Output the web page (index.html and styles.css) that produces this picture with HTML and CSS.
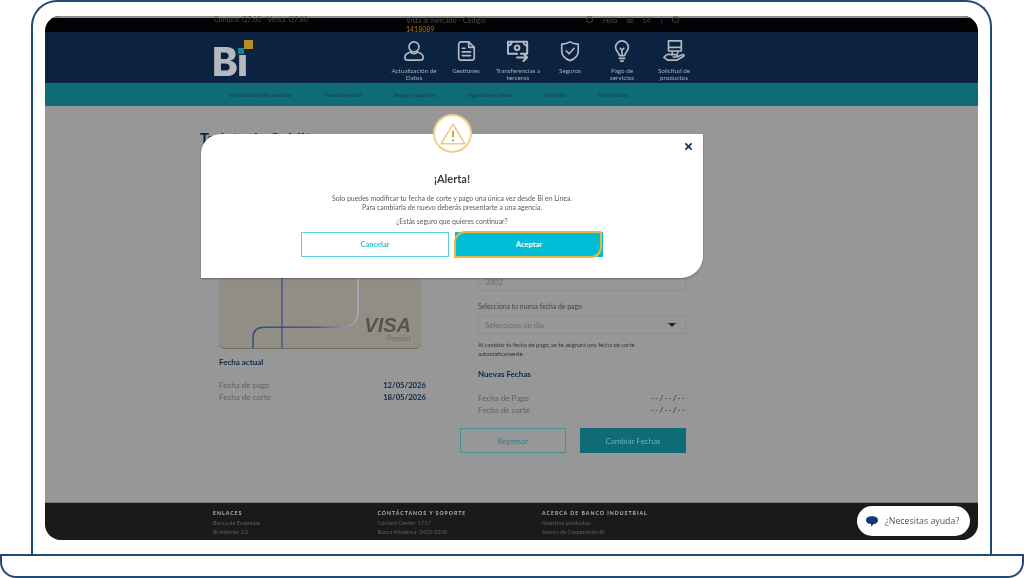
FILE: index.html
```html
<!DOCTYPE html>
<html lang="es">
<head>
    <meta charset="UTF-8">
    <meta name="viewport" content="width=device-width, initial-scale=1.0">
    <title>Cambio de fechas</title>
    <link rel="stylesheet" href="styles.css">
</head>
<body>
    <div class="lid">
        <div class="screen">
            <div class="topbar">
                <div class="topbar-rate">Compra: Q7.60 - Venta: Q7.80</div>
                <div class="topbar-user">
                    <div>Vista al mercado - Código:</div>
                    <div class="topbar-code">1418089</div>
                </div>
                <div class="topbar-tools">
                    <span class="topbar-dot"></span>
                    <span class="topbar-name">Hola de 14</span>
                    <span>|</span>
                    <span class="topbar-dot"></span>
                </div>
            </div>

            <div class="nav">
                <div class="logo">
                    <span class="logo-text">Bı</span>
                    <span class="logo-square-gold"></span>
                    <span class="logo-square-teal"></span>
                </div>
                <div class="nav-items">
                    <div class="nav-item">
                        <svg class="nav-icon" viewBox="0 0 24 24"><circle cx="12" cy="7.5" r="5.5"/><path d="M8 13c-3 1-6 2.500-6 6 0 2 1 3 3 3h14c2 0 3-1 3-3 0-3.500-3-5-6-6-1 1.500-2.500 2-4 2s-3-.5-4-2z"/></svg>
                        <span>Actualización de Datos</span>
                    </div>
                    <div class="nav-item">
                        <svg class="nav-icon" viewBox="0 0 24 24"><path d="M7 2h8l6 6v11c0 2-1 3-3 3H7c-2 0-3-1-3-3V5c0-2 1-3 3-3z"/><path d="M15 2v6h6M8 9h3M8 13h9M8 17h9"/></svg>
                        <span>Gestiones</span>
                    </div>
                    <div class="nav-item">
                        <svg class="nav-icon nav-icon-bill" viewBox="0 0 24 24"><path d="M15 15h7V2H1v13h10"/><path d="M1 6c2.500 0 4-1.500 4-4M18 2c0 2.500 2 4 4 4"/><circle cx="11" cy="8.500" r="2.500"/><path d="M11 19h11M18 15l4 4-4 4"/></svg>
                        <span>Transferencias a terceros</span>
                    </div>
                    <div class="nav-item">
                        <svg class="nav-icon" viewBox="0 0 24 24"><path d="M12 2c3 2 6 2.500 9 2.500V12c0 5-3.500 8.500-9 10.500C6.500 20.500 3 17 3 12V4.500C6 4.500 9 4 12 2z"/><path d="M8 12l3 3 5.500-6"/></svg>
                        <span>Seguros</span>
                    </div>
                    <div class="nav-item">
                        <svg class="nav-icon" viewBox="0 0 24 24"><path d="M9 17c0-3-4-4.500-4-9a7 7 0 0 1 14 0c0 4.500-4 6-4 9z"/><path d="M9 20h6M10.500 23h3M10 9l2 2 2-2M12 11v6"/></svg>
                        <span>Pago de<br>servicios</span>
                    </div>
                    <div class="nav-item">
                        <svg class="nav-icon" viewBox="0 0 24 24"><path d="M6 1h14v11H6zM6 8h14M10 12v3M16 12v3"/><path d="M1 19c2-3 5-4 8-3h5c2 0 2 2.500 0 2.500h-3 4l6-2.500c2-.5 2.500 1 1 2l-7 4H5z"/></svg>
                        <span>Solicitud de productos</span>
                    </div>
                </div>
            </div>

            <div class="subnav">
                <span>Información de cuentas</span>
                <span>Transferencias</span>
                <span>Pagos y aportes</span>
                <span>Agencia en línea</span>
                <span>Historial</span>
                <span>Otros sitios</span>
            </div>

            <div class="main">
                <h2 class="page-title">Tarjeta de Crédito</h2>
                <div class="columns">
                    <div class="col-left">
                        <div class="card">
                            <svg class="card-lines" viewBox="0 0 202 126" preserveAspectRatio="none">
                                <defs>
                                    <linearGradient id="lineFade" x1="0" y1="0" x2="1" y2="0">
                                        <stop offset="0" stop-color="#2f4c8c"/>
                                        <stop offset="0.6" stop-color="#3f5a96"/>
                                        <stop offset="1" stop-color="#a3adc2"/>
                                    </linearGradient>
                                </defs>
                                <path class="card-line-soft" d="M139 0V89c0 9-5 16-14 16H45c-7 0-11 4-11 11v10"/>
                                <path class="card-line" d="M63 0V126"/>
                            </svg>
                            <div class="card-brand">
                                <span class="card-visa">VISA</span>
                                <span class="card-tier">Premier</span>
                            </div>
                        </div>
                        <h3 class="section-title">Fecha actual</h3>
                        <div class="date-rows">
                            <div class="date-row"><span>Fecha de pago</span><strong>12/05/2026</strong></div>
                            <div class="date-row"><span>Fecha de corte</span><strong>18/05/2026</strong></div>
                        </div>
                    </div>

                    <div class="col-right">
                        <div class="field-label">Selecciona tu tarjeta</div>
                        <div class="select select-card"><span>3802</span></div>
                        <div class="field-label field-label-date">Selecciona tu nueva fecha de pago</div>
                        <div class="select">
                            <span>Selecciona un día</span>
                            <span class="select-arrow"></span>
                        </div>
                        <p class="note">Al cambiar tu fecha de pago, se te asignará una fecha de corte automáticamente.</p>
                        <h3 class="section-title section-title-new">Nuevas Fechas</h3>
                        <div class="date-rows date-rows-new">
                            <div class="date-row"><span>Fecha de Pago</span><b>--/--/--</b></div>
                            <div class="date-row"><span>Fecha de corte</span><b>--/--/--</b></div>
                        </div>
                        <div class="form-buttons">
                            <div class="btn-back">Regresar</div>
                            <div class="btn-change">Cambiar Fechas</div>
                        </div>
                    </div>
                </div>
            </div>

            <div class="footer">
                <div class="footer-col">
                    <h4>ENLACES</h4>
                    <div>Banca de Empresas</div>
                    <div>Bi Internet 2.0</div>
                </div>
                <div class="footer-col">
                    <h4>CONTÁCTANOS Y SOPORTE</h4>
                    <div>Contact Center: 1717</div>
                    <div>Banca Moderna: 2420-3200</div>
                </div>
                <div class="footer-col">
                    <h4>ACERCA DE BANCO INDUSTRIAL</h4>
                    <div>Nuestros productos</div>
                    <div>Acerca de Corporación Bi</div>
                </div>
            </div>

            <div class="modal">
                <div class="modal-icon">
                    <svg viewBox="0 0 24 24"><path d="M12 3L23 21H1z"/><path class="modal-icon-mark" d="M12 9v6M12 17v2"/></svg>
                </div>
                <svg class="modal-close" viewBox="0 0 10 10"><path d="M1.500 1.500l7 7M8.500 1.500l-7 7"/></svg>
                <h3 class="modal-title">¡Alerta!</h3>
                <p class="modal-text">Solo puedes modificar tu fecha de corte y pago una única vez desde Bi en Línea.<br>Para cambiarla de nuevo deberás presentarte a una agencia.</p>
                <p class="modal-question">¿Estás seguro que quieres continuar?</p>
                <div class="modal-buttons">
                    <div class="btn-cancel">Cancelar</div>
                    <div class="btn-accept">Aceptar</div>
                </div>
            </div>

            <div class="chat">
                <svg class="chat-icon" viewBox="0 0 14 12"><path d="M7 0c4 0 7 1.800 7 4.500S11.500 9 9 9L6 12V9C2.500 9 0 7.200 0 4.500S3 0 7 0z"/></svg>
                <span>¿Necesitas ayuda?</span>
            </div>
        </div>
    </div>
    <div class="base"></div>
</body>
</html>
```

FILE: styles.css
```css
* {
    margin: 0;
    padding: 0;
    box-sizing: border-box;
}

html, body {
    height: 578px;
    overflow: hidden;
}

body {
    font-family: "Lato", "Open Sans", sans-serif;
    background: white;
    color: #555;
}

/* laptop frame */
.lid {
    width: 961px;
    height: 554px;
    margin-left: 31px;
    padding: 14px 12px 13px;
    border: 2px solid #1f4a78;
    border-bottom: none;
    border-radius: 26px 26px 0 0;
}

.base {
    width: 1024px;
    height: 24px;
    border: 2px solid #1f4a78;
    border-radius: 0 0 16px 16px;
}

.screen {
    position: relative;
    height: 524px;
    display: flex;
    flex-direction: column;
    overflow: hidden;
    border-radius: 15px 15px 16px 16px;
    background: #979797;
    filter: blur(0.45px);
}

/* top strip */
.topbar {
    height: 16px;
    flex-shrink: 0;
    display: flex;
    padding-left: 169px;
    background: #020204;
    border-top: 2px solid #8b8f95;
    font-size: 7px;
    line-height: 9px;
    color: #4d4d42;
}

.topbar-rate {
    width: 192px;
    margin-top: -3px;
}

.topbar-user {
    width: 180px;
    margin-top: -2px;
}

.topbar-code {
    color: #a9781c;
}

.topbar-tools {
    display: flex;
    gap: 10px;
    margin-top: -2px;
}

.topbar-name {
    word-spacing: 7px;
}

.topbar-dot {
    width: 7px;
    height: 7px;
    border: 1px solid #4d4d42;
    border-radius: 50%;
}

/* main nav */
.nav {
    height: 51px;
    flex-shrink: 0;
    display: flex;
    padding-left: 167px;
    background: #0b2240;
}

.logo {
    position: relative;
    width: 176px;
    font-family: "Inter", sans-serif;
}

.logo-text {
    display: block;
    margin-top: 8px;
    font-size: 39px;
    line-height: 44px;
    font-weight: 800;
    letter-spacing: -1px;
    color: #b5b9bd;
}

.logo-square-gold {
    position: absolute;
    left: 32px;
    top: 8px;
    width: 9px;
    height: 9px;
    background: #b58e21;
}

.logo-square-teal {
    position: absolute;
    left: 26px;
    top: 16px;
    width: 6px;
    height: 6px;
    background: #1c7f8f;
}

.nav-items {
    display: flex;
}

.nav-item {
    width: 52px;
    padding-top: 8px;
    text-align: center;
    font-size: 6.3px;
    line-height: 7px;
    color: #a6adb6;
}

.nav-item span {
    display: block;
}

.nav-icon {
    display: block;
    width: 22px;
    height: 22px;
    margin: 0 auto 5px;
    fill: none;
    stroke: #b4bac2;
    stroke-width: 1.8;
    stroke-linejoin: round;
    stroke-linecap: round;
}

.nav-icon-bill {
    stroke-width: 2.2;
}

/* second nav */
.subnav {
    height: 23px;
    flex-shrink: 0;
    display: flex;
    align-items: center;
    gap: 32px;
    padding-left: 184px;
    background: #0e6b77;
    font-size: 6px;
    font-weight: 700;
    color: #0d4a5c;
}

/* page under the dialog */
.main {
    flex: 1;
    padding: 24px 0 0 155px;
}

.page-title {
    font-size: 15px;
    line-height: 16px;
    color: #0b2240;
}

.columns {
    display: grid;
    grid-template-columns: 202px 208px;
    gap: 57px;
    margin: 77px 0 0 19px;
}

.card {
    position: relative;
    height: 126px;
    overflow: hidden;
    border-radius: 0 0 6px 6px;
    border-bottom: 1px solid #6f6c66;
    background: #928e85;
}

.card-lines {
    position: absolute;
    inset: 0;
    width: 100%;
    height: 100%;
    fill: none;
}

.card-line {
    stroke: #2f4c8c;
    stroke-width: 1.2;
}

.card-line-soft {
    stroke: url(#lineFade);
    stroke-width: 1.5;
}

.card-brand {
    position: absolute;
    right: 10px;
    bottom: 5px;
    text-align: right;
    color: #55534e;
}

.card-visa {
    display: block;
    font-family: "Liberation Sans", sans-serif;
    font-size: 20px;
    line-height: 18px;
    font-weight: 700;
    font-style: italic;
}

.card-tier {
    display: block;
    font-size: 7px;
    line-height: 9px;
    color: #6c6a64;
}

.section-title {
    margin-top: 8px;
    font-size: 8px;
    line-height: 11px;
    font-weight: 700;
    color: #0f2747;
}

.date-rows {
    margin-top: 11px;
}

.date-rows-new {
    margin-top: 12px;
}

.date-row {
    display: flex;
    justify-content: space-between;
    font-size: 8px;
    line-height: 12px;
    color: #5f5f5f;
}

.date-row strong {
    margin-right: -5px;
    font-size: 7.7px;
    color: #0f2747;
}

.date-row b {
    letter-spacing: 1.2px;
    color: #4d4d4d;
}

.field-label {
    font-size: 6.9px;
    line-height: 10px;
    color: #444;
}

.field-label-date {
    margin-bottom: 4px;
}

.select {
    height: 19px;
    display: flex;
    align-items: center;
    justify-content: space-between;
    padding: 0 9px 0 6px;
    border: 1px solid #8c8c8c;
    border-radius: 2px;
    font-size: 7.8px;
    color: #6c6c6c;
}

.select-card {
    margin: 3px 0 10px;
}

.select-arrow {
    width: 0;
    height: 0;
    border-left: 4px solid transparent;
    border-right: 4px solid transparent;
    border-top: 4px solid #0f2747;
}

.note {
    max-width: 175px;
    margin-top: 7px;
    font-size: 5.8px;
    line-height: 8.5px;
    color: #333;
}

.section-title-new {
    margin-top: 11px;
}

.col-right {
    margin-top: 36px;
}

.form-buttons {
    display: flex;
    gap: 14px;
    margin: 12px 0 0 -18px;
}

.btn-back,
.btn-change {
    width: 106px;
    height: 25px;
    display: flex;
    align-items: center;
    justify-content: center;
    font-size: 8px;
}

.btn-back {
    border: 1px solid #4f8d95;
    color: #2f7f88;
}

.btn-change {
    background: #0e6b77;
    color: #6fb0b8;
}

/* footer */
.footer {
    height: 38px;
    flex-shrink: 0;
    display: flex;
    padding: 6px 0 0 168px;
    background: #1a1a1a;
    border-top: 1px solid #7a7a7a;
    font-size: 5.6px;
    line-height: 9px;
    color: #5f5f5f;
}

.footer-col {
    width: 164.5px;
}

.footer-col h4 {
    font-size: 5.2px;
    line-height: 9px;
    font-weight: 700;
    letter-spacing: 1px;
    color: #b9b9b9;
}

/* dialog */
.modal {
    position: absolute;
    left: 156px;
    top: 118px;
    width: 502px;
    height: 144px;
    padding-top: 38px;
    display: flex;
    flex-direction: column;
    align-items: center;
    background: white;
    border-radius: 20px 0 22px 0;
    box-shadow: 0 1px 2px rgba(0,0,0,0.3);
    text-align: center;
    color: #5d5d5d;
}

.modal-icon {
    position: absolute;
    left: 232px;
    top: -20px;
    width: 39px;
    height: 39px;
    display: flex;
    align-items: center;
    justify-content: center;
    border: 2px solid #f2cf87;
    border-radius: 50%;
    background: white;
}

.modal-icon svg {
    width: 26px;
    height: 26px;
    fill: none;
    stroke: #efcb84;
    stroke-width: 1.4;
    stroke-linejoin: round;
}

.modal-icon-mark {
    stroke: #d9a94f;
    stroke-width: 2;
}

.modal-close {
    position: absolute;
    right: 10px;
    top: 8px;
    width: 9px;
    height: 9px;
    fill: none;
    stroke: #123a66;
    stroke-width: 2;
}

.modal-title {
    font-size: 11px;
    line-height: 14px;
    font-weight: 700;
    color: #3d3d3d;
}

.modal-text {
    margin-top: 8px;
    font-size: 6.9px;
    line-height: 9px;
}

.modal-question {
    margin-top: 5px;
    font-size: 6.9px;
    line-height: 9px;
}

.modal-buttons {
    display: flex;
    gap: 6px;
    margin-top: 6px;
}

.btn-cancel,
.btn-accept {
    width: 148px;
    height: 25px;
    display: flex;
    align-items: center;
    justify-content: center;
    font-size: 7.5px;
    font-weight: 700;
}

.btn-cancel {
    border: 1px solid #59cfe0;
    color: #2cbdd2;
}

.btn-accept {
    position: relative;
    background: #00bcd4;
    color: white;
}

/* yellow focus ring, rounded on two corners only */
.btn-accept::after {
    content: "";
    position: absolute;
    inset: -1px 1px -1px -1px;
    border: 2px solid #e8b93c;
    border-radius: 11px 2px 11px 0;
}

/* chat bubble */
.chat {
    position: absolute;
    right: 8px;
    bottom: 4px;
    width: 113px;
    height: 30px;
    display: flex;
    align-items: center;
    gap: 7px;
    padding-left: 9px;
    background: white;
    border-radius: 15px;
    font-family: "Open Sans", sans-serif;
    font-size: 8.8px;
    color: #555;
}

.chat-icon {
    width: 12px;
    height: 11px;
    fill: #123a6e;
}
```
